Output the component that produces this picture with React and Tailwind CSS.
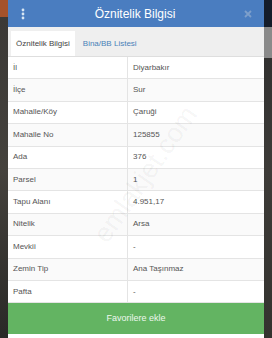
const rows = [
  ['İl', 'Diyarbakır'],
  ['İlçe', 'Sur'],
  ['Mahalle/Köy', 'Çaruği'],
  ['Mahalle No', '125855'],
  ['Ada', '376'],
  ['Parsel', '1'],
  ['Tapu Alanı', '4.951,17'],
  ['Nitelik', 'Arsa'],
  ['Mevkii', '-'],
  ['Zemin Tip', 'Ana Taşınmaz'],
  ['Pafta', '-'],
];

export default function App() {
  return (
    <div className="w-[272px] h-[338px] overflow-hidden flex bg-[#2e2d2b]"
      style={{ fontFamily: '"Liberation Sans", Arial, sans-serif' }}>
      {/* map strip left */}
      <div className="w-[8px] flex flex-col bg-gradient-to-b from-[#3a3835] via-[#45423d] to-[#2a2927]">
        <div className="h-[17px] bg-[#a5522a]" />
      </div>

      {/* modal */}
      <div className="w-[256px] flex flex-col bg-white relative">
        <div className="h-[27px] bg-[#4a7dc0] flex items-center justify-between px-[11px]">
          <svg width="6" height="12" viewBox="0 0 6 12" className="ml-[1px]">
            <circle cx="3" cy="2" r="1.4" fill="#d7e6f3" />
            <circle cx="3" cy="6" r="1.4" fill="#d7e6f3" />
            <circle cx="3" cy="10" r="1.4" fill="#d7e6f3" />
          </svg>
          <span className="text-white text-[12px] leading-none">Öznitelik Bilgisi</span>
          <svg width="8" height="8" viewBox="0 0 8 8" className="mr-[1px]">
            <path d="M1 1 L7 7 M7 1 L1 7" stroke="#7d9fcb" strokeWidth="1.8" />
          </svg>
        </div>

        <div className="h-[30px] bg-[#efefef] flex items-end pl-[3px] border-b border-[#dedede]">
          <div className="h-[25px] bg-white px-[5px] flex items-center text-[8px] text-[#444]">
            Öznitelik Bilgisi
          </div>
          <div className="h-[25px] px-[8px] flex items-center text-[8px] text-[#4a82b8]">
            Bina/BB Listesi
          </div>
        </div>

        <div className="flex flex-col">
          {rows.map(([k, v], i) => (
            <div key={i} className={`h-[22.4px] flex border-b border-[#e4e4e4] text-[8px] text-[#555] ${i % 2 === 1 ? 'bg-[#fafafa]' : 'bg-white'}`}>
              <div className="w-[120px] pl-[5px] flex items-center border-r border-[#e4e4e4]">{k}</div>
              <div className="flex-1 pl-[5px] flex items-center">{v}</div>
            </div>
          ))}
        </div>

        <div className="h-[31px] bg-[#63b462] flex items-center justify-center text-[9px] text-[#eef7ee]">
          Favorilere ekle
        </div>

        <div className="absolute left-[62px] top-[162px] w-[140px] text-center text-[27px] text-[#000]/[0.05] -rotate-[55deg] pointer-events-none select-none">
          emlakjet.com
        </div>
      </div>

      {/* map strip right */}
      <div className="w-[8px] flex flex-col bg-gradient-to-b from-[#2c2c2c] via-[#3d3b38] to-[#34332f]">
        <div className="h-[27px] bg-[#141c2a]" />
        <div className="h-[31px] bg-[#8a8a8a]" />
      </div>
    </div>
  );
}
